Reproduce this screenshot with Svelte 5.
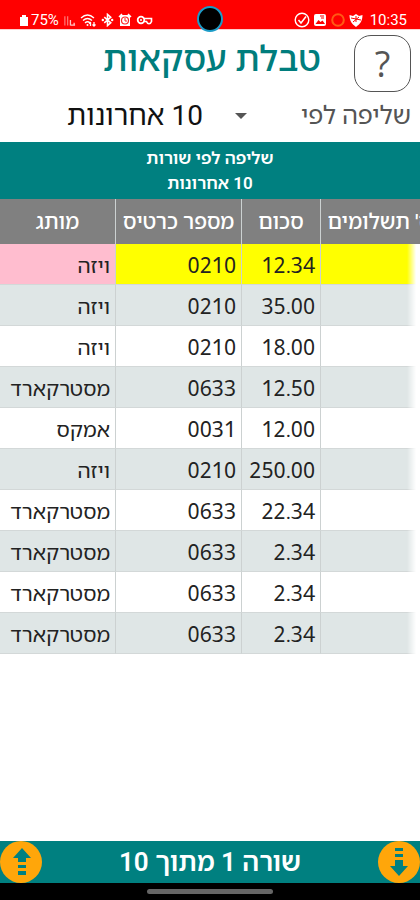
<script lang="ts">
  type Row = { brand: string; card: string; sum: string; payments: string };

  const rows: Row[] = [
    { brand: 'ויזה', card: '0210', sum: '12.34', payments: '' },
    { brand: 'ויזה', card: '0210', sum: '35.00', payments: '' },
    { brand: 'ויזה', card: '0210', sum: '18.00', payments: '' },
    { brand: 'מסטרקארד', card: '0633', sum: '12.50', payments: '' },
    { brand: 'אמקס', card: '0031', sum: '12.00', payments: '' },
    { brand: 'ויזה', card: '0210', sum: '250.00', payments: '' },
    { brand: 'מסטרקארד', card: '0633', sum: '22.34', payments: '' },
    { brand: 'מסטרקארד', card: '0633', sum: '2.34', payments: '' },
    { brand: 'מסטרקארד', card: '0633', sum: '2.34', payments: '' },
    { brand: 'מסטרקארד', card: '0633', sum: '2.34', payments: '' }
  ];

  let selected = $state(0);
  let filter = $state('last10');

  function move(step: number) {
    selected = Math.min(rows.length - 1, Math.max(0, selected + step));
  }
</script>

<div class="screen">
  <div class="status">
    <div class="status-group">
      <svg class="battery" viewBox="0 0 10 14" aria-hidden="true">
        <path d="M3 2h4v2h2v9H1V4h2z" fill="#fff" />
      </svg>
      <span class="percent">75%</span>
      <svg class="signal" viewBox="0 0 14 14" aria-hidden="true">
        <path d="M2 3v10M5 3v10" stroke="#ff7070" stroke-width="1.4" />
        <path d="M8 7v6M8 12.500h5M12 10v3" stroke="#ffc4c4" stroke-width="1.4" />
      </svg>
      <svg class="wifi" viewBox="0 0 17 14" aria-hidden="true">
        <g fill="none" stroke="#fff" stroke-width="1.3">
          <path d="M1 5Q7.500 -1 14 5M3 7.500Q7.500 3.500 12 7.500M5 10Q7.500 7.500 10 10" />
          <path d="M10.500 13V9M9 10.500l1.500-1.500M14 9v4M12.500 11.500l1.500 1.500 1.500-1.500" />
        </g>
        <circle cx="7.500" cy="12" r="1" fill="#fff" />
      </svg>
      <svg class="bluetooth" viewBox="0 0 14 14" aria-hidden="true">
        <path d="M3.500 4l7 6L7 13V1l3.500 3-7 6" fill="none" stroke="#fff" stroke-width="1.700" />
        <circle cx="2" cy="7" r="1.300" fill="#fff" /><circle cx="12" cy="7" r="1.300" fill="#fff" />
      </svg>
      <svg viewBox="0 0 14 14" aria-hidden="true">
        <path d="M2 2h10v11H2z" fill="#fff" />
        <path d="M1 4l3-3M13 4l-3-3" stroke="#fff" stroke-width="1.500" />
        <circle cx="7" cy="7.500" r="3.500" fill="none" stroke="#f22" stroke-width="1.200" />
        <path d="M7 5v3h2" fill="none" stroke="#f22" />
      </svg>
      <svg class="key" viewBox="0 0 17 14" aria-hidden="true">
        <path d="M8 5.500h7.500v3c-1 3-4 3-5 0H8" fill="none" stroke="#fff" stroke-width="1.600" />
        <circle cx="5" cy="7" r="3.300" fill="none" stroke="#fff" stroke-width="1.800" />
        <circle cx="5" cy="7" r="1" fill="#fff" />
      </svg>
    </div>
    <span class="camera"></span>
    <div class="status-group right">
      <svg class="big" viewBox="0 0 16 16" aria-hidden="true">
        <circle cx="8" cy="8" r="6.800" fill="none" stroke="#fff" stroke-width="1.400" />
        <path d="M4.500 8l2.500 3 5-6.500" fill="none" stroke="#fff" stroke-width="1.500" />
      </svg>
      <svg class="big" viewBox="0 0 16 16" aria-hidden="true">
        <rect x="2" y="2" width="12" height="12" rx="2" fill="#fff" />
        <path d="M3.500 12l3-4 2 2 2-1.500 2.500 3.500z" fill="#f00" />
        <path d="M8 4h4M9 6h3" stroke="#f00" />
      </svg>
      <svg class="big" viewBox="0 0 16 16" aria-hidden="true">
        <circle cx="8" cy="8" r="5.800" fill="none" stroke="#ff5a14" stroke-width="2" />
      </svg>
      <svg class="big" viewBox="0 0 16 16" aria-hidden="true">
        <path d="M1.500 3l3.500 1 3-2 3 2 3.500-1c0 6-2.500 9-6.500 12C4 12 1.500 9 1.500 3z" fill="#fff" />
        <path d="M3 6l10 2M5 10l6-5M8 4v6" stroke="#f00" />
      </svg>
      <time class="clock">10:35</time>
    </div>
  </div>

  <header class="top" dir="rtl">
    <button type="button" class="help" aria-label="עזרה">?</button>
    <h1>טבלת עסקאות</h1>
  </header>

  <div class="filter" dir="rtl">
    <label for="filter">שליפה לפי</label>
    <div class="picker">
      <svg viewBox="0 0 12 6" aria-hidden="true"><path d="M0 0h12L6 6z" fill="#555" /></svg>
      <select id="filter" bind:value={filter}>
        <option value="last10">10 אחרונות</option>
      </select>
    </div>
  </div>

  <div class="caption" dir="rtl">
    <div>שליפה לפי שורות</div>
    <div>10 אחרונות</div>
  </div>

  <div class="table-wrap">
    <table>
      <colgroup>
        <col class="c-brand" />
        <col class="c-card" />
        <col class="c-sum" />
        <col />
      </colgroup>
      <thead>
        <tr>
          <th scope="col">מותג</th>
          <th scope="col">מספר כרטיס</th>
          <th scope="col">סכום</th>
          <th scope="col" dir="rtl">מס' תשלומים</th>
        </tr>
      </thead>
      <tbody>
        {#each rows as row, i}
          <tr class:selected={i === selected} onclick={() => (selected = i)}>
            <td class="brand">{row.brand}</td>
            <td>{row.card}</td>
            <td>{row.sum}</td>
            <td>{row.payments}</td>
          </tr>
        {/each}
      </tbody>
    </table>
    <span class="fade"></span>
  </div>

  <footer>
    <button type="button" class="arrow" aria-label="שורה קודמת" onclick={() => move(-1)}>
      <svg viewBox="0 0 42 42" aria-hidden="true">
        <path d="M22 7l9 10h-5v4h-8v-4h-5zM18 24h8v3h-8zM18 30h8v4h-8z" />
      </svg>
    </button>
    <output dir="rtl">שורה {selected + 1} מתוך {rows.length}</output>
    <button type="button" class="arrow" aria-label="שורה הבאה" onclick={() => move(1)}>
      <svg viewBox="0 0 42 42" aria-hidden="true">
        <path d="M21 35l-9-10h5v-6h8v6h5zM17 13h8v3h-8zM17 7h8v3h-8z" />
      </svg>
    </button>
  </footer>
  <div class="nav"><span></span></div>
</div>

<style>
  :global(body) {
    margin: 0;
    background: #fff;
  }

  .screen {
    min-height: 100vh;
    display: flex;
    flex-direction: column;
    overflow: hidden;
    font-family: Roboto, 'Noto Sans Hebrew', 'Open Sans', sans-serif;
    color: #222;
  }

  button,
  select {
    font-family: inherit;
    border: none;
    padding: 0;
    background: none;
  }

  .status {
    height: 29px;
    background: #f00;
    color: #fff;
    display: grid;
    grid-template-columns: 1fr 26px 1fr;
    align-items: center;
    border-bottom: 1px solid #fcc;
  }

  .status-group {
    display: flex;
    align-items: center;
    gap: 4px;
    padding: 8px 0 0 19px;
    font-size: 15px;
    line-height: 20px;
  }

  .status-group.right {
    justify-content: flex-end;
    gap: 2px;
    padding: 8px 13px 0 0;
  }

  .status svg {
    width: 14px;
    height: 14px;
    flex: none;
  }

  .status .battery {
    width: 10px;
  }

  .status .wifi,
  .status .key {
    width: 17px;
  }

  .status .signal,
  .status .bluetooth {
    width: 13px;
  }

  .status .big {
    width: 16px;
    height: 16px;
  }

  .percent {
    margin-left: -2px;
  }

  .clock {
    margin-left: 4px;
  }

  .camera {
    width: 22px;
    height: 22px;
    margin-top: 6px;
    border: 2px solid #1c9cc8;
    border-radius: 50%;
    background: #000;
  }

  .top {
    display: flex;
    align-items: flex-start;
    gap: 33px;
    padding: 5px 9px 0;
  }

  .help {
    box-sizing: border-box;
    width: 57px;
    height: 57px;
    border: 1px solid #555;
    border-radius: 17px;
    color: #555;
    font-family: 'Open Sans', sans-serif;
    font-size: 36px;
    font-weight: 500;
    line-height: 50px;
  }

  h1 {
    margin: 0;
    color: #007d7d;
    font-size: 35px;
    font-weight: 500;
    line-height: 50px;
  }

  .filter {
    display: flex;
    align-items: center;
    justify-content: space-between;
    height: 47px;
    padding: 0 9px 3px 67px;
  }

  .filter label {
    color: #555;
    font-size: 25px;
    line-height: 36px;
  }

  .picker {
    display: flex;
    align-items: center;
    gap: 32px;
  }

  .picker svg {
    width: 12px;
    height: 6px;
  }

  .picker select {
    appearance: none;
    color: #111;
    font-size: 28px;
    line-height: 36px;
  }

  .caption {
    padding: 4px 0 3px;
    background: #008080;
    color: #fff;
    font-size: 17px;
    font-weight: 600;
    line-height: 25px;
    text-align: center;
  }

  .table-wrap {
    position: relative;
    overflow: hidden;
  }

  /* the last column runs past the right edge of the screen */
  table {
    width: calc(100% + 26px);
    table-layout: fixed;
    border-collapse: separate;
    border-spacing: 0;
  }

  .c-brand {
    width: 116px;
  }

  .c-card {
    width: 126px;
  }

  .c-sum {
    width: 79px;
  }

  th,
  td {
    box-sizing: border-box;
    border-right: 1px solid #ccd1d1;
    white-space: nowrap;
  }

  th {
    height: 45px;
    padding: 0;
    background: #808080;
    color: #fff;
    font-size: 21px;
    font-weight: 500;
    line-height: 28px;
  }

  th:last-child {
    padding-left: 8px;
    text-align: left;
  }

  td {
    height: 41px;
    padding: 2px 5px 0;
    border-bottom: 1px solid #d3d8d8;
    font-family: 'Noto Sans Hebrew', 'Open Sans', 'Noto Sans', sans-serif;
    font-size: 21px;
    line-height: 28px;
    text-align: right;
  }

  tbody tr:nth-child(even) {
    background: #dfe6e6;
  }

  tbody tr.selected {
    background: #ff0;
  }

  .selected .brand {
    background: #ffbdcf;
  }

  .fade {
    position: absolute;
    top: 45px;
    right: 0;
    bottom: 0;
    width: 13px;
    background: linear-gradient(to right, transparent, #fff 70%);
  }

  footer {
    display: flex;
    align-items: center;
    justify-content: space-between;
    margin-top: auto;
    background: #008080;
    color: #fff;
    font-size: 26px;
    font-weight: 600;
    line-height: 38px;
  }

  .arrow {
    width: 42px;
    height: 42px;
    border-radius: 50%;
    background: #ffa60a;
  }

  .arrow svg {
    display: block;
    width: 42px;
    height: 42px;
    fill: #008080;
  }

  .nav {
    display: flex;
    justify-content: center;
    padding: 6px 0;
    background: #000;
  }

  .nav span {
    width: 30%;
    height: 5px;
    border-radius: 3px;
    background: #666;
  }
</style>
